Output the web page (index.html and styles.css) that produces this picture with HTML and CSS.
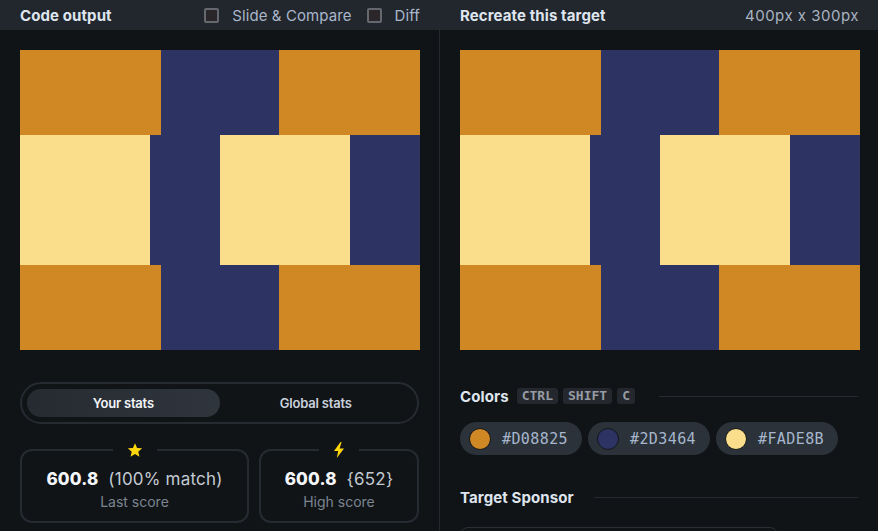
FILE: index.html
```html
<!DOCTYPE html>
<html>
<head>
<meta charset="utf-8">
<link rel="stylesheet" href="styles.css">
</head>
<body>
<div class="app">
  <section class="panel left">
    <header class="bar">
      <span class="title">Code output</span>
      <div class="opts">
        <label class="opt"><span class="box"></span>Slide &amp; Compare</label>
        <label class="opt"><span class="box"></span>Diff</label>
      </div>
    </header>
    <div class="body">
      <div class="canvas">
        <div class="row edge"><i class="o w141"></i><i class="n w118"></i><i class="o w141"></i></div>
        <div class="row mid"><i class="c w130"></i><i class="n w70"></i><i class="c w130"></i><i class="n w70"></i></div>
        <div class="row edge"><i class="o w141"></i><i class="n w118"></i><i class="o w141"></i></div>
      </div>
      <div class="toggle">
        <button class="tab active">Your stats</button>
        <button class="tab">Global stats</button>
      </div>
      <div class="cards">
        <div class="card wide">
          <span class="badge"><svg width="16" height="16" viewBox="0 0 24 24"><path fill="#ffd60a" d="M12 1.8l3.1 7.1 7.6.6-5.8 5 1.8 7.5L12 18l-6.7 4 1.8-7.5-5.8-5 7.6-.6z"/></svg></span>
          <div class="score"><b>600.8</b> (100% match)</div>
          <div class="label">Last score</div>
        </div>
        <div class="card">
          <span class="badge"><svg width="12" height="16" viewBox="0 0 12 16"><path fill="#ffd60a" d="M7.5 0L1 9h4.2L3.8 16 11 6.6H6.6L8.6 0z"/></svg></span>
          <div class="score"><b>600.8</b> {652}</div>
          <div class="label">High score</div>
        </div>
      </div>
    </div>
  </section>
  <section class="panel right">
    <header class="bar">
      <span class="title">Recreate this target</span>
      <span class="dims">400px x 300px</span>
    </header>
    <div class="body">
      <div class="canvas">
        <div class="row edge"><i class="o w141"></i><i class="n w118"></i><i class="o w141"></i></div>
        <div class="row mid"><i class="c w130"></i><i class="n w70"></i><i class="c w130"></i><i class="n w70"></i></div>
        <div class="row edge"><i class="o w141"></i><i class="n w118"></i><i class="o w141"></i></div>
      </div>
      <div class="heading colors-h">
        <span class="htext">Colors</span>
        <kbd>CTRL</kbd><kbd>SHIFT</kbd><kbd>C</kbd>
        <span class="rule"></span>
      </div>
      <div class="chips">
        <span class="chip"><span class="dot o"></span>#D08825</span>
        <span class="chip"><span class="dot n"></span>#2D3464</span>
        <span class="chip"><span class="dot c"></span>#FADE8B</span>
      </div>
      <div class="heading sponsor-h">
        <span class="htext">Target Sponsor</span>
        <span class="rule"></span>
      </div>
      <div class="sponsor"></div>
    </div>
  </section>
</div>
</body>
</html>
```

FILE: styles.css
```css
* { box-sizing: border-box; }
html, body { margin: 0; padding: 0; }
body {
  background: #111417;
  font-family: Inter, "Noto Sans", sans-serif;
  color: #dde3ea;
  width: 878px;
  height: 531px;
  overflow: hidden;
}
.app { display: flex; height: 531px; overflow: hidden; }
.panel { display: flex; flex-direction: column; overflow: hidden; height: 531px; }
.left { width: 440px; border-right: 1px solid #23272e; }
.right { flex: 1; }
.bar {
  height: 30px;
  background: #22262d;
  display: flex;
  align-items: center;
  justify-content: space-between;
  padding: 0 19px 0 20px;
  flex: none;
}
.title { font-weight: 700; font-size: 15px; letter-spacing: 0.1px; color: #dfe5ee; }
.opts { display: flex; gap: 15px; align-items: center; }
.opt { display: flex; align-items: center; gap: 13px; font-size: 15px; color: #a9b7cb; letter-spacing: 0.1px; }
.box { width: 15px; height: 15px; border: 2px solid #65686f; border-radius: 2px; background: #2a2629; }
.dims { font-size: 15px; color: #a9b3c1; letter-spacing: 0.5px; }
.body { padding: 20px; display: flex; flex-direction: column; }
.canvas { width: 400px; height: 300px; display: flex; flex-direction: column; flex: none; }
.row { display: flex; }
.row i { display: block; }
.edge { height: 85px; }
.mid { height: 130px; }
.o { background: #D08825; }
.n { background: #2D3464; }
.c { background: #FADE8B; }
.w141 { width: 141px; }
.w118 { width: 118px; }
.w130 { width: 130px; }
.w70 { width: 70px; }

.toggle {
  margin-top: 32px;
  height: 42px;
  border: 2px solid #262b32;
  border-radius: 21px;
  display: flex;
  padding: 5px;
  width: 399px;
  flex: none;
}
.tab {
  flex: 1;
  border: 0;
  background: transparent;
  font-family: inherit;
  font-size: 13px;
  font-weight: 600;
  color: #c9d1db;
  border-radius: 14px;
  letter-spacing: -0.2px;
}
.tab.active { background: linear-gradient(90deg, #262b31, #2f353d); color: #f2f5f8; }
.cards { display: flex; gap: 10px; margin-top: 25px; }
.card {
  position: relative;
  height: 74px;
  border: 2px solid #262b32;
  border-radius: 12px;
  width: 160px;
  display: flex;
  flex-direction: column;
  align-items: center;
  justify-content: center;
  gap: 4px;
  padding-top: 6px;
}
.card.wide { width: 229px; }
.badge {
  position: absolute;
  top: -10px;
  left: 50%;
  transform: translateX(-50%);
  background: #111417;
  padding: 0 14px;
  height: 18px;
  display: flex;
  align-items: center;
}
.score { font-size: 17px; color: #c3cad3; letter-spacing: 0.2px; }
.score b { color: #f4f6f9; font-weight: 800; margin-right: 5px; }
.label { font-size: 14px; color: #7b8491; }

.heading { display: flex; align-items: center; flex: none; }
.htext { font-weight: 700; font-size: 15px; color: #dfe5ee; letter-spacing: 0.1px; }
.rule { flex: 1; height: 1px; background: #262b32; }
.colors-h { margin-top: 36px; height: 20px; }
.colors-h .htext { margin-right: 8px; }
.colors-h .rule { margin-left: 19px; }
kbd {
  font-family: "DejaVu Sans Mono", monospace;
  font-size: 13px;
  font-weight: 700;
  color: #979ca4;
  background: #24282e;
  border-radius: 3px;
  padding: 0 5px;
  margin-right: 5px;
  line-height: 16px;
  height: 16px;
}
.chips { display: flex; gap: 6px; margin-top: 16px; flex: none; }
.chip {
  height: 33px;
  width: 122px;
  border-radius: 17px;
  background: #2b323a;
  display: flex;
  align-items: center;
  padding-left: 9px;
  gap: 11px;
  font-family: "DejaVu Sans Mono", monospace;
  font-size: 15px;
  letter-spacing: 0.4px;
  color: #a7b6cc;
}
.dot { width: 22px; height: 22px; border-radius: 50%; border: 1px solid #141619; flex: none; }
.sponsor-h { margin-top: 32px; height: 20px; }
.sponsor-h .rule { margin-left: 20px; }
.sponsor {
  margin-top: 20px;
  width: 318px;
  height: 40px;
  border: 1px solid #2a2f36;
  border-radius: 8px;
  flex: none;
}
```
